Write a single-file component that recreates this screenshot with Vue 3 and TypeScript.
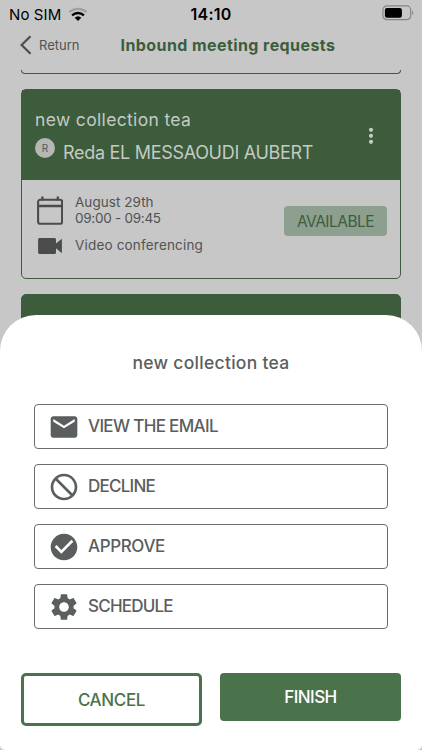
<script setup lang="ts">
interface Option {
  id: string
  label: string
  path: string
  cls: string
}

const options: Option[] = [
  { id: 'email', label: 'VIEW THE EMAIL', cls: 't-email', path: 'M20 4H4c-1.1 0-1.99.9-1.99 2L2 18c0 1.1.9 2 2 2h16c1.1 0 2-.9 2-2V6c0-1.1-.9-2-2-2zm0 4l-8 5-8-5V6l8 5 8-5v2z' },
  { id: 'decline', label: 'DECLINE', cls: 't-decline', path: 'M12 2C6.48 2 2 6.48 2 12s4.48 10 10 10 10-4.48 10-10S17.52 2 12 2zM4 12c0-4.42 3.58-8 8-8 1.85 0 3.55.63 4.9 1.69L5.69 16.9C4.63 15.55 4 13.85 4 12zm8 8c-1.85 0-3.55-.63-4.9-1.69L18.31 7.1C19.37 8.45 20 10.15 20 12c0 4.42-3.58 8-8 8z' },
  { id: 'approve', label: 'APPROVE', cls: 't-approve', path: 'M12 2C6.48 2 2 6.48 2 12s4.48 10 10 10 10-4.48 10-10S17.52 2 12 2zm-2 15l-5-5 1.41-1.41L10 14.17l7.59-7.59L19 8l-9 9z' },
  { id: 'schedule', label: 'SCHEDULE', cls: 't-schedule', path: 'M19.14 12.94c.04-.3.06-.61.06-.94 0-.32-.02-.64-.07-.94l2.03-1.58c.18-.14.23-.41.12-.61l-1.92-3.32c-.12-.22-.37-.29-.59-.22l-2.39.96c-.5-.38-1.03-.7-1.62-.94l-.36-2.54c-.04-.24-.24-.41-.48-.41h-3.84c-.24 0-.43.17-.47.41l-.36 2.54c-.59.24-1.13.57-1.62.94l-2.39-.96c-.22-.08-.47 0-.59.22L2.74 8.87c-.12.21-.08.47.12.61l2.03 1.58c-.05.3-.09.63-.09.94s.02.64.07.94l-2.03 1.58c-.18.14-.23.41-.12.61l1.92 3.32c.12.22.37.29.59.22l2.39-.96c.5.38 1.03.7 1.62.94l.36 2.54c.05.24.24.41.48.41h3.84c.24 0 .44-.17.47-.41l.36-2.54c.59-.24 1.13-.56 1.62-.94l2.39.96c.22.08.47 0 .59-.22l1.92-3.32c.12-.22.07-.47-.12-.61l-2.01-1.58zM12 15.6c-1.98 0-3.6-1.62-3.6-3.6s1.62-3.6 3.6-3.6 3.6 1.62 3.6 3.6-1.62 3.6-3.6 3.6z' },
]
</script>

<template>
  <div class="screen">
    <div class="status">
      <div class="carrier">
        <span class="t-sim">No SIM</span>
        <svg width="20" height="15" viewBox="0 0 20 15" fill="none">
          <path d="M1.4 5.2a12.6 12.6 0 0 1 17.2 0" stroke="#a0a0a0" stroke-width="2.3" />
          <path d="M4.1 8.3a8.7 8.7 0 0 1 11.8 0" stroke="#000" stroke-width="2.4" />
          <path d="M10 14l-3.3-3.3a4.8 4.8 0 0 1 6.6 0z" fill="#000" />
        </svg>
      </div>
      <span class="t-time">14:10</span>
      <div class="power">
        <svg width="32" height="16" viewBox="0 0 32 16">
          <rect x=".9" y=".9" width="27.8" height="13.8" rx="4" fill="none" stroke="#858585" stroke-width="1.2" />
          <rect x="2.9" y="2.9" width="17" height="9.9" rx="2" fill="#000" />
          <path d="M30.1 5.6c1.6.7 1.6 3.7 0 4.4z" fill="#858585" />
        </svg>
      </div>
    </div>

    <header class="nav">
      <div class="back">
        <svg width="12" height="20" viewBox="0 0 12 20" fill="none" stroke="#4e4f4f" stroke-width="2.3">
          <path d="M10.5 1.3L1.6 10l8.9 8.7" />
        </svg>
        <span class="t-return">Return</span>
      </div>
      <h1 class="t-heading">Inbound meeting requests</h1>
    </header>

    <main class="list">
      <article class="card tail"></article>
      <article class="card">
        <div class="card-head">
          <div class="who">
            <div class="t-topic">new collection tea</div>
            <div class="person">
              <span class="avatar">R</span>
              <span class="t-person">Reda EL MESSAOUDI AUBERT</span>
            </div>
          </div>
          <svg class="dots" width="6" height="18" viewBox="0 0 6 18" fill="#c4cac4">
            <circle cx="3" cy="2.8" r="2.1" />
            <circle cx="3" cy="8.8" r="2.1" />
            <circle cx="3" cy="14.8" r="2.1" />
          </svg>
        </div>
        <div class="card-body">
          <div class="details">
            <div class="row">
              <svg width="28" height="30" viewBox="0 0 28 30" fill="none" stroke="#4a4b4b">
                <rect x="3.1" y="4.8" width="24" height="24" rx="2" stroke-width="2.1" />
                <path d="M3 11h24.2M7.4 1.6v4M22.8 1.6v4" stroke-width="2.3" />
              </svg>
              <div class="when">
                <span class="t-date">August 29th</span>
                <span class="t-hours">09:00 - 09:45</span>
              </div>
            </div>
            <div class="row video">
              <svg width="28" height="16" viewBox="0 0 28 16" fill="#4a4b4b">
                <path d="M4.6 0h15q1.4 0 1.4 1.4v4.2L26.9.7v14.5L21 10.2v4.3q0 1.5-1.4 1.5h-15q-1.5 0-1.5-1.5V1.4Q3.1 0 4.6 0z" />
              </svg>
              <span class="t-video">Video conferencing</span>
            </div>
          </div>
          <span class="badge"><span class="t-badge">AVAILABLE</span></span>
        </div>
      </article>
      <article class="card next"></article>
    </main>

    <section class="sheet">
      <h2 class="t-sheet">new collection tea</h2>
      <div class="options">
        <button v-for="o in options" :key="o.id" class="option">
          <svg width="32" height="32" viewBox="0 0 24 24" fill="#5b5e5e"><path :d="o.path" :transform="o.id === 'decline' ? 'matrix(-1 0 0 1 24 0)' : undefined" /></svg>
          <span :class="o.cls">{{ o.label }}</span>
        </button>
      </div>
      <div class="actions">
        <button class="cancel"><span class="t-cancel">CANCEL</span></button>
        <button class="finish"><span class="t-finish">FINISH</span></button>
      </div>
    </section>
  </div>
</template>

<style>
body { margin: 0; background: #c7c7c7; }
</style>

<style scoped>
* { box-sizing: border-box; }
.screen {
  position: relative;
  width: 422px;
  height: 750px;
  overflow: hidden;
  background: #c7c7c7;
  color: #515353;
  font-family: Inter, "Liberation Sans", sans-serif;
}
span, h1, h2, .t-topic { white-space: nowrap; }
h1, h2 { margin: 0; }
svg { display: block; flex: none; }
button { font: inherit; color: inherit; padding: 0; }

.status {
  display: grid;
  grid-template-columns: 1fr auto 1fr;
  align-items: center;
  height: 28px;
  padding: 0 8px 0 9px;
  color: #000;
}
.carrier { display: flex; align-items: center; gap: 7px; }
.power { display: flex; justify-content: flex-end; padding-bottom: 2px; }
.t-sim { font-size: 15px; letter-spacing: 0.1px; }
.t-time { font-size: 16px; font-weight: 600; letter-spacing: 0.2px; padding-right: 1px; }

.nav { display: flex; align-items: center; height: 34px; padding: 0 20px; }
.back { display: flex; align-items: center; gap: 7px; width: 100.5px; }
.t-return { font-size: 13px; }
.t-heading { font-size: 16px; font-weight: 700; color: #3c5d3d; letter-spacing: 0.42px; }

.list { display: flex; flex-direction: column; gap: 15px; padding: 8px 21px 0; }
.card { border: 1.5px solid #3c5c3c; border-radius: 5px; flex: none; }
.tail { height: 4px; border-top: 0; border-radius: 0 0 4px 4px; }
.card-head {
  display: flex;
  justify-content: space-between;
  align-items: center;
  height: 90px;
  padding: 0 26px 0 13px;
  background: #3c5c3c;
  color: #c4cac4;
}
.who { display: flex; flex-direction: column; padding-top: 5px; }
.dots { margin-top: 1px; }
.t-topic { font-size: 17.5px; line-height: 26px; letter-spacing: 0.34px; }
.person { display: flex; align-items: center; gap: 8px; height: 36px; }
.avatar {
  display: flex;
  align-items: center;
  justify-content: center;
  width: 20px;
  height: 20px;
  margin-bottom: 5px;
  border-radius: 50%;
  background: #b4b7b4;
  color: #515553;
  font-size: 10px;
}
.t-person { font-size: 18px; letter-spacing: -0.3px; padding-top: 3px; }
.card-body { display: flex; justify-content: space-between; height: 98px; padding: 14px 13px 0 13px; }
.details { display: flex; flex-direction: column; }
.row { display: flex; gap: 12px; align-items: center; }
.when { display: flex; flex-direction: column; }
.when span { line-height: 16px; }
.video { margin-top: 12px; }
.t-date, .t-hours, .t-video { font-size: 13.5px; }
.t-date { letter-spacing: 0.05px; }
.t-hours { letter-spacing: -0.27px; }
.t-video { letter-spacing: 0.18px; line-height: 14px; padding-bottom: 2px; }
.badge {
  display: flex;
  align-items: center;
  justify-content: center;
  width: 103px;
  height: 30px;
  margin-top: 12px;
  border-radius: 4px;
  background: #8d9f8f;
  color: #3c5d40;
}
.t-badge { font-size: 15.5px; letter-spacing: -0.52px; }
.next { height: 60px; background: #3c5c3c; }

.sheet {
  position: absolute;
  left: 0;
  right: 0;
  top: 315px;
  height: 435px;
  padding: 35px 21px 0;
  background: #fff;
  border-radius: 36px 36px 5px 5px;
  color: #5b5e5e;
}
.t-sheet { font-size: 17.5px; font-weight: 500; line-height: 26px; text-align: center; letter-spacing: 0.28px; }
.options { display: flex; flex-direction: column; gap: 15px; padding: 28px 13px 0; }
.option {
  display: flex;
  align-items: center;
  gap: 8.5px;
  height: 45px;
  padding: 0 12px 0 12.5px;
  border: 1.5px solid #6c6c6c;
  border-radius: 4px;
  background: #fff;
  font-size: 17px;
  font-weight: 500;
}
.option span { padding-bottom: 2px; }
.t-email { letter-spacing: -0.66px; }
.t-decline { letter-spacing: -0.75px; }
.t-approve { letter-spacing: -0.38px; }
.t-schedule { letter-spacing: -0.78px; }
.actions { display: flex; gap: 18px; align-items: flex-start; margin-top: 44px; font-weight: 500; font-size: 17px; }
.cancel { width: 181px; height: 53px; border: 3px solid #4b734b; border-radius: 5px; background: #fff; color: #4b734b; }
.finish { width: 181px; height: 48px; border: 0; border-radius: 4px; background: #4b734b; color: #fff; }
.t-cancel { letter-spacing: -0.35px; }
.t-finish { letter-spacing: -0.55px; }
</style>
